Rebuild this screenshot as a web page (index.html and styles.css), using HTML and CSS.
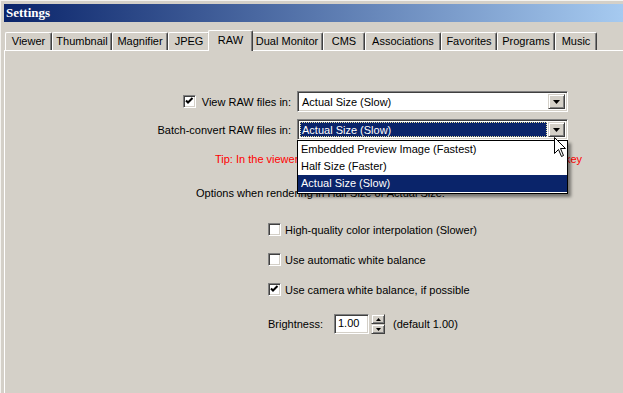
FILE: index.html
```html
<!DOCTYPE html>
<html lang="en">
<head>
    <meta charset="UTF-8">
    <title>Settings</title>
    <link rel="stylesheet" href="styles.css">
</head>
<body>
    <div class="window">
        <div class="titlebar">Settings</div>

        <div class="tabstrip">
            <div class="tab">Viewer</div>
            <div class="tab">Thumbnail</div>
            <div class="tab">Magnifier</div>
            <div class="tab">JPEG</div>
            <div class="tab active">RAW</div>
            <div class="tab">Dual Monitor</div>
            <div class="tab">CMS</div>
            <div class="tab">Associations</div>
            <div class="tab">Favorites</div>
            <div class="tab">Programs</div>
            <div class="tab">Music</div>
        </div>

        <div class="panel">
            <div class="combo-grid">
                <label class="field-label">
                    <span class="checkbox">
                        <svg width="13" height="13" viewBox="0 0 13 13"><polyline points="3,5.5 5,7.5 9.5,3" fill="none" stroke="#000" stroke-width="2"/></svg>
                    </span>
                    View RAW files in:
                </label>
                <div class="combo">
                    <span class="combo-value">Actual Size (Slow)</span>
                    <span class="combo-btn">
                        <svg width="7" height="4" viewBox="0 0 7 4"><polygon points="0,0 7,0 3.5,4" fill="#000"/></svg>
                    </span>
                </div>

                <label class="field-label">Batch-convert RAW files in:</label>
                <div class="combo open">
                    <span class="combo-value focus">Actual Size (Slow)</span>
                    <span class="combo-btn">
                        <svg width="7" height="4" viewBox="0 0 7 4"><polygon points="0,0 7,0 3.5,4" fill="#000"/></svg>
                    </span>
                    <ul class="combo-list">
                        <li>Embedded Preview Image (Fastest)</li>
                        <li>Half Size (Faster)</li>
                        <li class="selected">Actual Size (Slow)</li>
                    </ul>
                    <svg class="cursor" width="13" height="21" viewBox="0 0 13 21">
                        <polygon points="0.5,0.5 0.5,16.5 4.5,12.5 7.5,19.5 9.5,18.5 6.5,11.5 11.5,11.5" fill="#fff" stroke="#000" stroke-width="1"/>
                    </svg>
                </div>
            </div>

            <p class="tip">Tip: In the viewer, you can switch to Actual Size for this image with a hotkey</p>
            <p class="options-title">Options when rendering in Half Size or Actual Size:</p>

            <div class="options">
                <label class="option"><span class="checkbox"></span>High-quality color interpolation (Slower)</label>
                <label class="option"><span class="checkbox"></span>Use automatic white balance</label>
                <label class="option">
                    <span class="checkbox">
                        <svg width="13" height="13" viewBox="0 0 13 13"><polyline points="3,5.5 5,7.5 9.5,3" fill="none" stroke="#000" stroke-width="2"/></svg>
                    </span>
                    Use camera white balance, if possible
                </label>
            </div>

            <div class="brightness">
                <span class="brightness-label">Brightness:</span>
                <span class="number-box">1.00</span>
                <span class="spinner">
                    <span class="spin-btn"><svg width="5" height="3" viewBox="0 0 5 3"><polygon points="2.5,0 5,3 0,3" fill="#000"/></svg></span>
                    <span class="spin-btn"><svg width="5" height="3" viewBox="0 0 5 3"><polygon points="0,0 5,0 2.5,3" fill="#000"/></svg></span>
                </span>
                <span class="hint">(default 1.00)</span>
            </div>
        </div>
    </div>
</body>
</html>
```

FILE: styles.css
```css
body {
    margin: 0;
    background-color: #d4d0c8;
    font-family: "Liberation Sans", Arial, sans-serif;
    font-size: 11px;
    color: #000;
}
.window {
    height: 393px;
    overflow: hidden;
    border-top: 1px solid #f4f3f0;
    border-left: 1px solid #f4f3f0;
    padding: 3px 0 0 3px;
    box-sizing: border-box;
}
.titlebar {
    height: 18px;
    line-height: 18px;
    padding-left: 2px;
    background: linear-gradient(to right, #0a246a, #a6caf0);
    color: #fff;
    font-family: "Liberation Serif", "Times New Roman", serif;
    font-weight: bold;
    font-size: 13px;
}
.tabstrip {
    display: grid;
    grid-template-columns: 47px 60px 56px 42px 41px 72px 42px 76px 56px 58px 42px;
    align-items: end;
    height: 20px;
    margin: 8px 0 0 1px;
    position: relative;
    z-index: 2;
}
.tab {
    height: 18px;
    box-sizing: border-box;
    border-top: 1px solid #fff;
    border-left: 1px solid #fff;
    border-right: 1px solid #404040;
    border-radius: 2px 2px 0 0;
    box-shadow: inset -1px 0 #808080;
    text-align: center;
    line-height: 16px;
    white-space: nowrap;
}
.tab.active {
    height: 21px;
    margin: 0 -2px -1px;
    background-color: #d4d0c8;
    line-height: 18px;
    position: relative;
}
.panel {
    border-top: 1px solid #fff;
    border-left: 1px solid #fff;
    height: 400px;
    padding-top: 40px;
    box-sizing: border-box;
}
.combo-grid {
    display: grid;
    grid-template-columns: 286px 271px;
    column-gap: 6px;
    row-gap: 7px;
    align-items: center;
}
.field-label {
    display: flex;
    justify-content: flex-end;
    align-items: center;
    gap: 6px;
    white-space: nowrap;
}
.checkbox {
    width: 13px;
    height: 13px;
    box-sizing: border-box;
    flex: none;
    background-color: #fff;
    border-top: 1px solid #808080;
    border-left: 1px solid #808080;
    border-right: 1px solid #fff;
    border-bottom: 1px solid #fff;
    box-shadow: inset 1px 1px #404040, inset -1px -1px #d4d0c8;
    position: relative;
}
.checkbox svg {
    position: absolute;
    left: -1px;
    top: -1px;
}
.combo {
    position: relative;
    height: 21px;
    box-sizing: border-box;
    display: flex;
    align-items: stretch;
    padding: 2px;
    background-color: #fff;
    border-top: 1px solid #808080;
    border-left: 1px solid #808080;
    border-right: 1px solid #fff;
    border-bottom: 1px solid #fff;
    box-shadow: inset 1px 1px #404040, inset -1px -1px #d4d0c8;
}
.combo-value {
    flex: 1;
    display: flex;
    align-items: center;
    padding-left: 2px;
    margin-right: 1px;
    white-space: nowrap;
}
.combo-value.focus {
    background-color: #0a246a;
    color: #fff;
    outline: 1px dotted #e8e0a0;
    outline-offset: -1px;
}
.combo-btn {
    width: 17px;
    box-sizing: border-box;
    display: flex;
    align-items: center;
    justify-content: center;
    background-color: #d4d0c8;
    border-top: 1px solid #d4d0c8;
    border-left: 1px solid #d4d0c8;
    border-right: 1px solid #404040;
    border-bottom: 1px solid #404040;
    box-shadow: inset 1px 1px #fff, inset -1px -1px #808080;
}
.combo-list {
    position: absolute;
    top: 20px;
    left: -1px;
    width: 271px;
    box-sizing: border-box;
    margin: 0;
    padding: 0 0 1px;
    list-style: none;
    background-color: #fff;
    border: 1px solid #000;
    box-shadow: 3px 3px 3px rgba(0, 0, 0, 0.45);
    z-index: 5;
}
.combo-list li {
    height: 17px;
    line-height: 17px;
    padding-left: 3px;
}
.combo-list li.selected {
    background-color: #0a246a;
    color: #fff;
}
.cursor {
    position: absolute;
    left: 256px;
    top: 17px;
    z-index: 6;
}
.tip {
    margin: 13px 0 0;
    padding-left: 210px;
    line-height: 13px;
    color: #ff0000;
    white-space: nowrap;
}
.options-title {
    margin: 21px 0 0;
    padding-left: 191px;
    line-height: 13px;
}
.options {
    margin: 23px 0 0 263px;
    display: flex;
    flex-direction: column;
    gap: 17px;
}
.option {
    display: flex;
    align-items: center;
    gap: 4px;
    height: 13px;
}
.brightness {
    margin: 18px 0 0 263px;
    display: flex;
    align-items: center;
    height: 20px;
}
.brightness-label {
    width: 66px;
}
.number-box {
    width: 35px;
    height: 20px;
    box-sizing: border-box;
    padding-left: 3px;
    line-height: 16px;
    background-color: #fff;
    border-top: 1px solid #808080;
    border-left: 1px solid #808080;
    border-right: 1px solid #fff;
    border-bottom: 1px solid #fff;
    box-shadow: inset 1px 1px #404040, inset -1px -1px #d4d0c8;
}
.spinner {
    margin-left: 2px;
    display: flex;
    flex-direction: column;
    height: 20px;
}
.spin-btn {
    width: 14px;
    height: 10px;
    box-sizing: border-box;
    display: flex;
    align-items: center;
    justify-content: center;
    border-top: 1px solid #d4d0c8;
    border-left: 1px solid #d4d0c8;
    border-right: 1px solid #404040;
    border-bottom: 1px solid #404040;
    box-shadow: inset 1px 1px #fff, inset -1px -1px #808080;
}
.hint {
    margin-left: 8px;
}
```
